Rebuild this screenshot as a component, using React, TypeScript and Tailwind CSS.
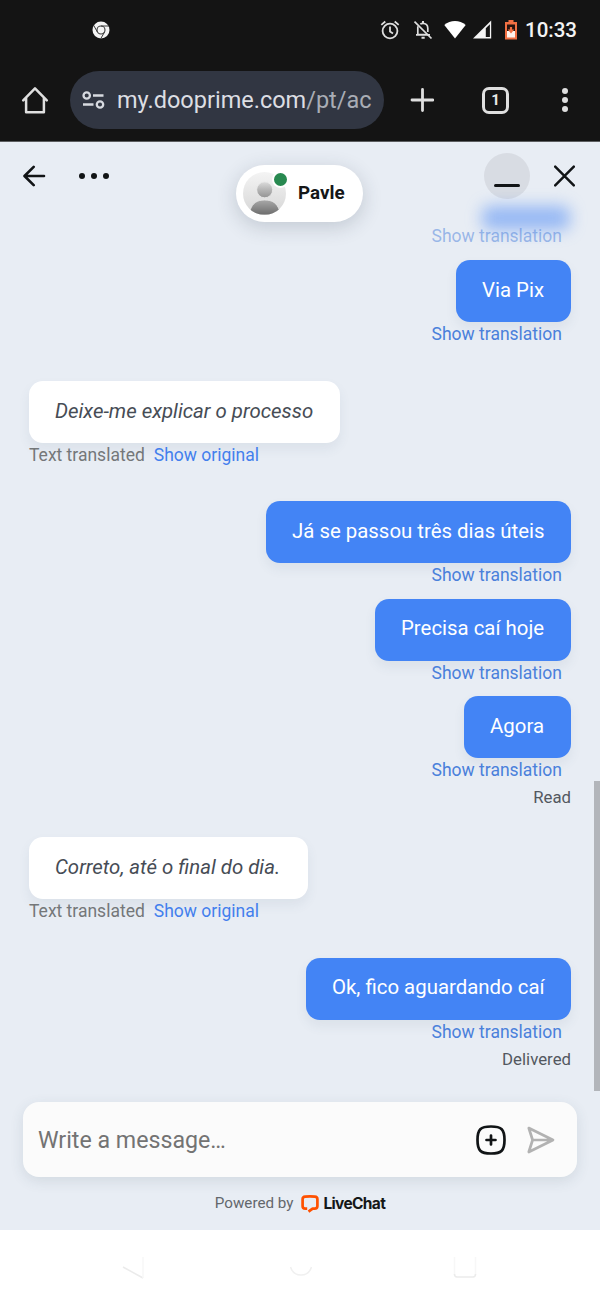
import React from "react";

function ChromeMark() {
  return (
    <svg className="shrink-0" width="18" height="18" viewBox="0 0 18 18">
      <circle cx="9" cy="9" r="8.5" fill="#f4f4f4" />
      <circle cx="9" cy="9" r="4" fill="none" stroke="#3a3a3a" strokeWidth="1.1" />
      <path d="M9 5H17M5.4 11L1.7 4.4M12.5 11.1L8.7 17.8" stroke="#3a3a3a" strokeWidth="1" />
    </svg>
  );
}

function StatusBar() {
  return (
    <div className="flex h-[60px] items-center pl-[92px] pr-[22px]">
      <ChromeMark />
      <div className="ml-auto flex items-center">
        <svg className="shrink-0" width="20" height="20" viewBox="0 0 20 20" fill="none" stroke="#dedede" strokeWidth="1.8">
          <circle cx="10" cy="11" r="7.4" />
          <path d="M10 6.5V11.4L13 13.4M1.3 4.9L5.3 1.5M18.7 4.9L14.7 1.5" />
        </svg>
        <svg className="ml-[13px] shrink-0" width="20" height="20" viewBox="0 0 20 20" fill="none" stroke="#dedede" strokeWidth="1.7">
          <path d="M4.8 6.3V14.6H14.5M3 14.8H17M7.3 4.1C8 3.6 9 3.3 10 3.3C12.8 3.3 14.8 5.4 14.8 8.2V12" />
          <path d="M1.5 1.7L18.5 18.5" />
          <path d="M8.5 17.8H11.7M10 1V3.2" strokeWidth="2" />
        </svg>
        <svg className="ml-[11px] shrink-0" width="22" height="20" viewBox="0 0 22 20">
          <path d="M0.3 5.1C6.2 -.4 15.8 -.4 21.7 5.1L11 18.5Z" fill="#fff" />
        </svg>
        <svg className="ml-[7px] shrink-0" width="19" height="20" viewBox="0 0 19 20">
          <path d="M0 18.5L18.2 .5V18.5Z" fill="#f4f4f4" />
          <path d="M12.8 8.3L16.9 4.2V17H12.8Z" fill="#141414" />
        </svg>
        <svg className="ml-[13px] shrink-0" width="12" height="20" viewBox="0 0 12 20">
          <path d="M3.5 0H8.5V2H12V19.5H0V2H3.5Z" fill="#f27043" />
          <path d="M2 4.5H10V11H2Z" fill="#25140f" />
          <path d="M2 11H10V17.5H2Z" fill="#fff2ec" />
          <path d="M4.9 7H7.1V9.5H9.3L6 13.5L2.7 9.5H4.9Z" fill="#f27043" />
        </svg>
        <span className="ml-[8px] w-[53px] whitespace-nowrap text-[20.5px] font-medium leading-6 text-[#f4f4f4]">10:33</span>
      </div>
    </div>
  );
}

function BrowserBar() {
  return (
    <div className="flex h-[81px] items-start pl-[21px] pt-[11px]">
      <svg className="mt-[15px] shrink-0" width="28" height="29" viewBox="0 0 28 29" fill="none" stroke="#dfdfdf" strokeWidth="2.5" strokeLinejoin="round" strokeLinecap="round">
        <path d="M2.2 14.3L14 2.4L25.8 14.3M5.1 12V26.3H22.9V12" />
      </svg>
      <div className="ml-[21px] flex h-[58px] w-[314px] items-center rounded-full bg-[#313642] pl-[12px]">
        <svg className="shrink-0" width="23" height="20" viewBox="0 0 23 20" fill="none" stroke="#d7dae0" strokeWidth="2.3">
          <circle cx="4.7" cy="5.5" r="3.2" />
          <circle cx="18" cy="14.5" r="3.2" />
          <path d="M11 5.5H21.5M1 14.5H11.5" />
        </svg>
        <span className="ml-[12px] mt-[2px] whitespace-nowrap text-[23.5px] text-[#dcdee3]">
          my.dooprime.com<span className="text-[#a9adb5]">/pt/ac</span>
        </span>
      </div>
      <svg className="ml-[26px] mt-[17px] shrink-0" width="24" height="24" viewBox="0 0 24 24" stroke="#dfdfdf" strokeWidth="2.8" strokeLinecap="round">
        <path d="M12.5 1.5V22.5M2 12H23" />
      </svg>
      <div className="ml-[48px] mt-[16px] flex h-[27px] w-[27px] items-center justify-center rounded-[7px] border-[3px] border-[#dfdfdf] text-[15px] font-bold leading-none text-[#e8e8e8]">
        1
      </div>
      <div className="ml-[53px] mt-[17px] flex flex-col gap-[3px]">
        <i className="h-[6px] w-[6px] rounded-full bg-[#dfdfdf]" />
        <i className="h-[6px] w-[6px] rounded-full bg-[#dfdfdf]" />
        <i className="h-[6px] w-[6px] rounded-full bg-[#dfdfdf]" />
      </div>
    </div>
  );
}

function Avatar() {
  return (
    <div className="relative h-[43px] w-[43px] shrink-0">
      <svg width="43" height="43" viewBox="0 0 43 43">
        <defs>
          <linearGradient id="disc" x1="0" y1="0" x2="0" y2="1">
            <stop offset="0" stopColor="#f4f4f4" />
            <stop offset="1" stopColor="#d6d6d6" />
          </linearGradient>
          <linearGradient id="head" x1="0" y1="0" x2="0" y2="1">
            <stop offset="0" stopColor="#dcdcdc" />
            <stop offset="0.45" stopColor="#b8b8b8" />
            <stop offset="1" stopColor="#939393" />
          </linearGradient>
          <linearGradient id="body" x1="0" y1="0" x2="0" y2="1">
            <stop offset="0" stopColor="#a8a8a8" />
            <stop offset="1" stopColor="#6c6c6c" />
          </linearGradient>
          <clipPath id="round"><circle cx="21.5" cy="21.5" r="21.5" /></clipPath>
        </defs>
        <g clipPath="url(#round)">
          <rect width="43" height="43" fill="url(#disc)" />
          <path d="M7 38.5C9.5 31 14 28 21.7 28S34 31 36.5 38.5L30 43H13Z" fill="url(#body)" stroke="#e8e8e8" strokeWidth="0.8" />
          <circle cx="21.7" cy="17.8" r="8" fill="url(#head)" stroke="#ececec" strokeWidth="0.8" />
        </g>
      </svg>
      <span className="absolute -right-[3px] -top-[1px] h-[17px] w-[17px] rounded-full border-[2.5px] border-white bg-[#288950]" />
    </div>
  );
}

function ChatHeader() {
  return (
    <div className="relative flex h-[82px] shrink-0 items-start">
      <span className="absolute left-[482px] top-[64px] h-[24px] w-[88px] rounded-[8px] bg-[#4384f5]/50 blur-[8px]" />
      <svg className="ml-[23px] mt-[23px] shrink-0" width="23" height="22" viewBox="0 0 23 22" fill="none" stroke="#111416" strokeWidth="2.6" strokeLinecap="round" strokeLinejoin="round">
        <path d="M21 11H1.8M10.7 1.8L1.5 11L10.7 20.2" />
      </svg>
      <div className="ml-[32.5px] mt-[31px] flex gap-[6px]">
        <i className="h-[6px] w-[6px] rounded-full bg-[#111416]" />
        <i className="h-[6px] w-[6px] rounded-full bg-[#111416]" />
        <i className="h-[6px] w-[6px] rounded-full bg-[#111416]" />
      </div>
      <div className="ml-[127.5px] mt-[23px] flex h-[57px] w-[127px] items-center rounded-full bg-white pl-[7px] shadow-[0_5px_20px_rgba(40,55,75,0.2)]">
        <Avatar />
        <span className="ml-[12px] text-[18.8px] font-bold text-[#151718]">Pavle</span>
      </div>
      <div className="ml-[121px] mt-[11px] flex h-[46px] w-[46px] items-end justify-center rounded-full bg-[#d8dce3] pb-[12px]">
        <span className="h-[3px] w-[26px] rounded-full bg-[#111416]" />
      </div>
      <svg className="ml-[24px] mt-[23px] shrink-0" width="21" height="22" viewBox="0 0 21 22" stroke="#111416" strokeWidth="2.5" strokeLinecap="round">
        <path d="M1.2 1.7L19.8 20.3M19.8 1.7L1.2 20.3" />
      </svg>
    </div>
  );
}

function Translate({ faded = false }: { faded?: boolean }) {
  return (
    <div className={"relative mr-[9px] h-[26px] self-end whitespace-nowrap text-[17.5px] leading-[25.5px] " + (faded ? "text-[#4a80db]/50" : "text-[#4a80db]")}>
      Show translation
    </div>
  );
}

function Sent({ text, width, top }: { text: string; width: string; top: string }) {
  return (
    <>
      <div className={"flex h-[62px] shrink-0 items-center self-end whitespace-nowrap rounded-[14px] bg-[#4384f5] pb-[1.5px] pl-[26px] text-[20.4px] text-white shadow-[0_6px_12px_rgba(60,90,110,0.08)] " + width + " " + top}>
        {text}
      </div>
      <Translate />
    </>
  );
}

function Received({ text, width, top }: { text: string; width: string; top: string }) {
  return (
    <>
      <div className={"flex h-[62px] shrink-0 items-center self-start whitespace-nowrap rounded-[14px] bg-white pb-[1px] pl-[26px] text-[20.4px] italic text-[#464c55] shadow-[0_6px_12px_rgba(60,90,110,0.08)] " + width + " " + top}>
        {text}
      </div>
      <div className="relative flex h-[26px] gap-[9px] whitespace-nowrap text-[17.5px] leading-[25px] text-[#747779]">
        <span>Text translated</span>
        <span className="text-[#437fed]">Show original</span>
      </div>
    </>
  );
}

function Receipt({ text }: { text: string }) {
  return <div className="h-[27px] self-end text-[16.8px] leading-[27px] text-[#53585f]">{text}</div>;
}

function Composer() {
  return (
    <div className="mx-[23px] flex h-[75px] shrink-0 items-center rounded-[16px] bg-[#fbfbfb] pl-[15px] shadow-[0_4px_14px_rgba(50,70,90,0.12)]">
      <span className="mt-[2px] whitespace-nowrap text-[23.2px] text-[#737373]">Write a message…</span>
      <svg className="ml-auto mt-[1px] shrink-0" width="30" height="30" viewBox="0 0 30 30" fill="none" stroke="#111416" strokeWidth="2.7" strokeLinecap="round">
        <path d="M15 1.5C25.5 1.5 28.5 4.5 28.5 15S25.5 28.5 15 28.5S1.5 25.5 1.5 15S4.5 1.5 15 1.5Z" />
        <path d="M15 10.5V19.5M10.5 15H19.5" />
      </svg>
      <svg className="ml-[20.5px] mr-[22.5px] mt-[1px] shrink-0" width="28" height="28" viewBox="0 0 28 28" fill="none" stroke="#b2b2b2" strokeWidth="2.7" strokeLinejoin="round">
        <path d="M1.8 2L26 14L1.8 26L5.6 14ZM5.6 14H26" />
      </svg>
    </div>
  );
}

function NavigationBar() {
  return (
    <div className="flex h-[70px] shrink-0 items-start bg-white pl-[122px] pt-[26px]">
      <svg width="22" height="23" viewBox="0 0 22 23" fill="none" strokeWidth="1.5">
        <path d="M1 11L21 22" stroke="#ebebeb" />
        <path d="M21 22V1" stroke="#f7f7f7" />
      </svg>
      <svg className="ml-[145px]" width="24" height="23" viewBox="0 0 24 23" fill="none" strokeWidth="1.5">
        <path d="M1.5 11Q4 19 12 19Q20 19 22.5 11" stroke="#f0f0f0" />
      </svg>
      <svg className="ml-[140px]" width="24" height="23" viewBox="0 0 24 23" fill="none" strokeWidth="1.5">
        <path d="M1.5 1V19M22.5 1V19" stroke="#f7f7f7" />
        <path d="M1.5 18Q1.5 21 4 21H20Q22.500 21 22.5 18" stroke="#ebebeb" />
      </svg>
    </div>
  );
}

export default function App() {
  return (
    <div className="flex h-[1300px] w-[600px] flex-col overflow-hidden bg-[#e8edf4] font-['Roboto','Liberation_Sans',sans-serif]">
      <header className="h-[142px] shrink-0 border-b border-[#5c5e60] bg-[#141414]">
        <StatusBar />
        <BrowserBar />
      </header>
      <main className="relative flex h-[1088px] shrink-0 flex-col">
        <ChatHeader />
        <div className="flex h-[878px] shrink-0 flex-col px-[29px]">
          <Translate faded />
          <Sent text="Via Pix" width="w-[115px]" top="mt-[10px]" />
          <Received text="Deixe-me explicar o processo" width="w-[311px]" top="mt-[32.5px]" />
          <Sent text="Já se passou três dias úteis" width="w-[305px]" top="mt-[32.5px]" />
          <Sent text="Precisa caí hoje" width="w-[196px]" top="mt-[9.5px]" />
          <Sent text="Agora" width="w-[107px]" top="mt-[9.5px]" />
          <Receipt text="Read" />
          <Received text="Correto, até o final do dia." width="w-[278.5px]" top="mt-[25.5px]" />
          <Sent text="Ok, fico aguardando caí" width="w-[265px]" top="mt-[33px]" />
          <Receipt text="Delivered" />
        </div>
        <span className="absolute right-0 top-[639px] h-[310px] w-[6px] bg-[#b2b5ba]" />
        <Composer />
        <footer className="flex h-[53px] items-center justify-center text-[15.2px] text-[#63676c]">
          <span>Powered by</span>
          <svg className="ml-[8px] mt-[1px] shrink-0" width="18" height="18" viewBox="0 0 18 18" fill="none" stroke="#ff5100" strokeWidth="2.7" strokeLinejoin="round">
            <path d="M6.2 13.6H4.2Q1.6 13.6 1.6 10.9V4.2Q1.6 1.8 4.2 1.6Q9 1.2 13.8 1.6Q16.4 1.8 16.4 4.2V10.9Q16.4 13.6 13.6 13.6H11.6L7.5 16.6" />
          </svg>
          <span className="ml-[4px] font-['Inter','Liberation_Sans',sans-serif] text-[15.5px] font-bold tracking-[-0.65px] text-[#151718]">LiveChat</span>
        </footer>
      </main>
      <NavigationBar />
    </div>
  );
}
